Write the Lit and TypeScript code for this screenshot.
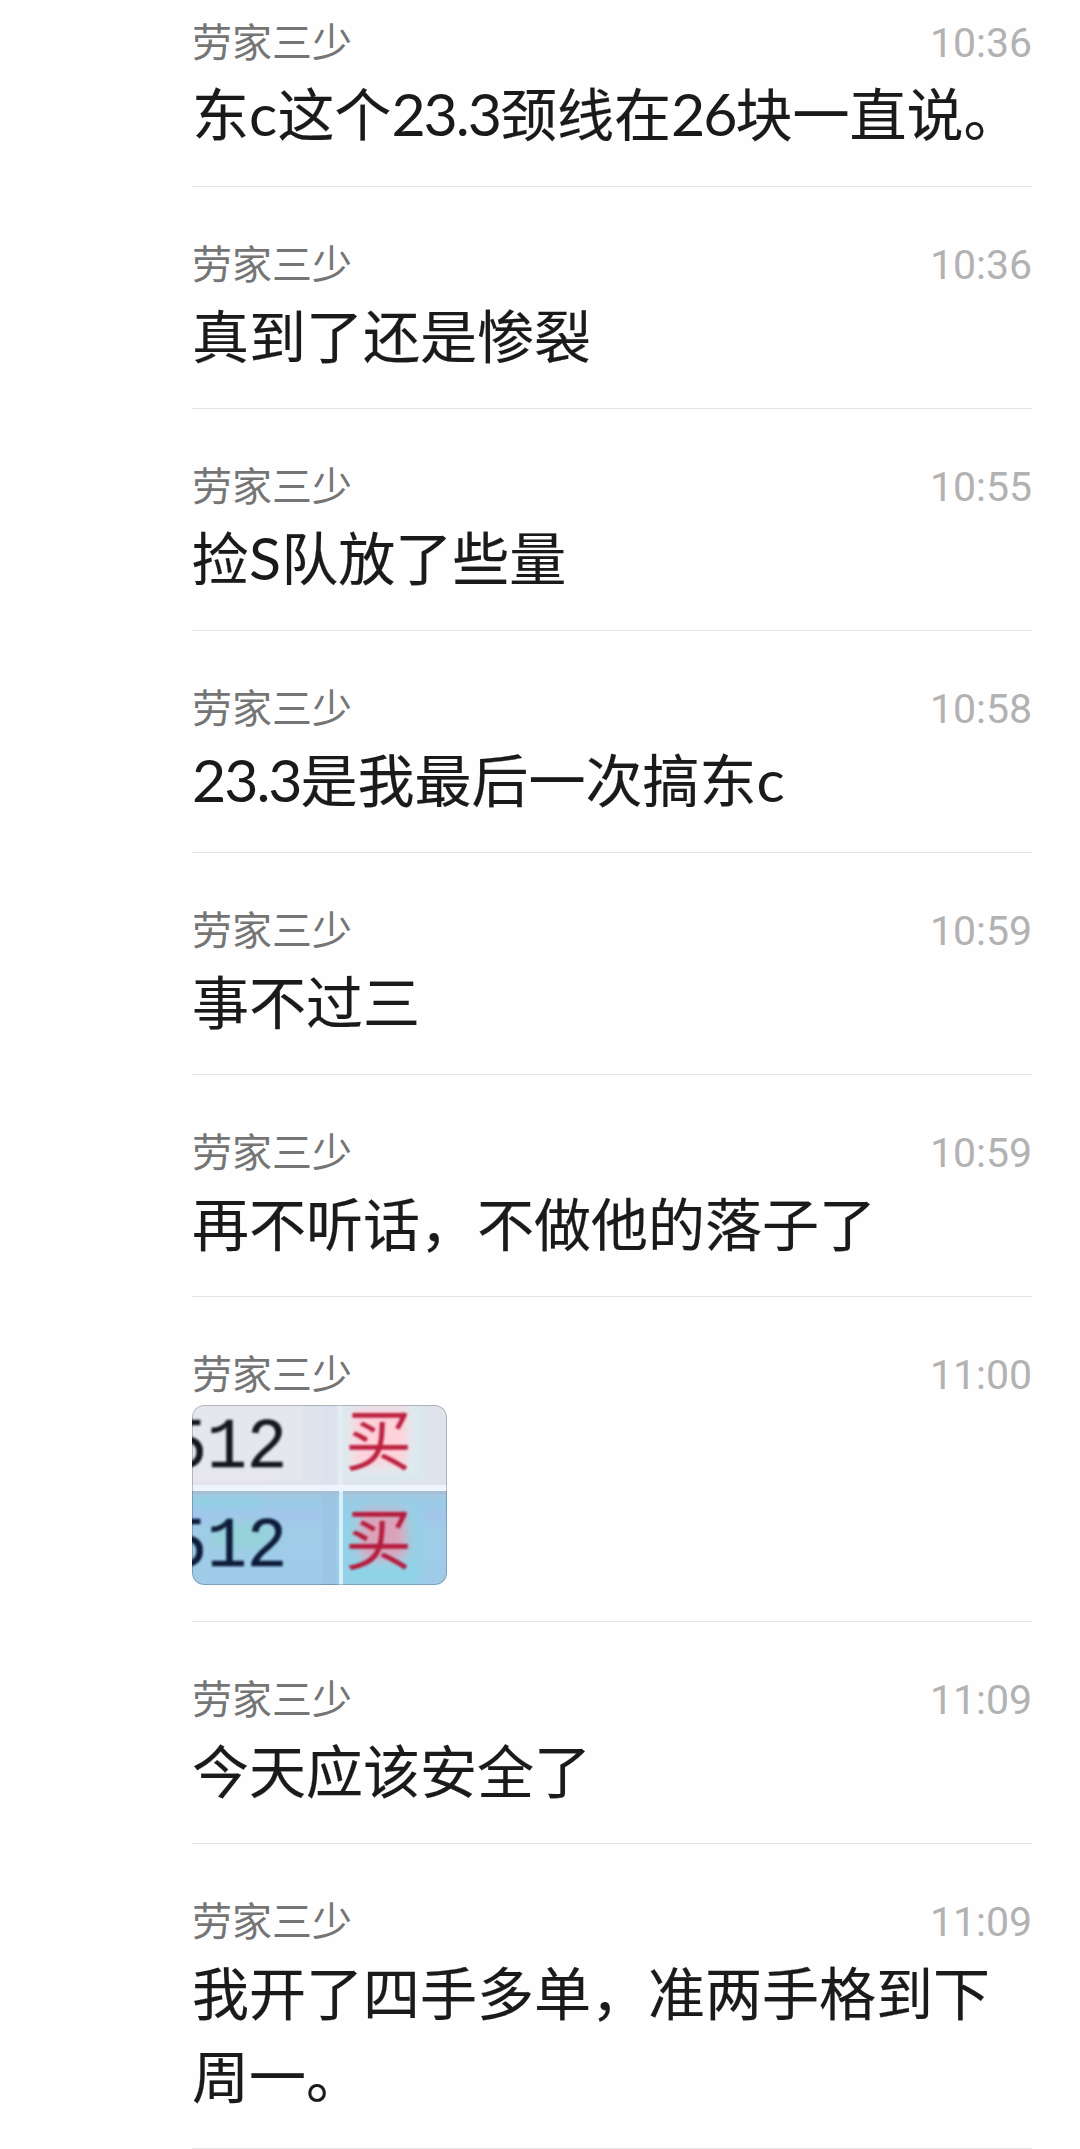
import { LitElement, html, css, svg } from "lit";
import { customElement, property } from "lit/decorators.js";

interface Message {
  time: string;
  text?: string;
}

const SENDER = "劳家三少";

const MESSAGES: Message[] = [
  { time: "10:36", text: "东c这个23.3颈线在26块一直说。" },
  { time: "10:36", text: "真到了还是惨裂" },
  { time: "10:55", text: "捡S队放了些量" },
  { time: "10:58", text: "23.3是我最后一次搞东c" },
  { time: "10:59", text: "事不过三" },
  { time: "10:59", text: "再不听话，不做他的落子了" },
  { time: "11:00" },
  { time: "11:09", text: "今天应该安全了" },
  { time: "11:09", text: "我开了四手多单，准两手格到下周一。" },
];

/** Cropped thumbnail of two order rows: lot number and direction. */
@customElement("order-thumb")
export class OrderThumb extends LitElement {
  static styles = css`
    :host { display: block; width: 255px; height: 180px; border-radius: 12px; overflow: hidden; }
    svg { display: block; }
    .num { font-family: "Liberation Mono", monospace; font-size: 71px; }
    .dir { font-family: "Noto Sans CJK SC", sans-serif; font-size: 67px; font-weight: 400; }
  `;

  private row(y: number, ink: string, red: string) {
    return svg`
      <text class="num" x="-25" y=${y} fill=${ink} stroke=${ink} stroke-width="0.5" textLength="120" lengthAdjust="spacingAndGlyphs">512</text>
      <text class="dir" x="153" y=${y - 2} fill=${red}>买</text>`;
  }

  render() {
    return html`<svg width="255" height="180" viewBox="0 0 255 180">
      <defs>
        <filter id="soft" x="-40%" y="-40%" width="180%" height="180%"><feGaussianBlur stdDeviation="6" /></filter>
        <filter id="ink" x="-5%" y="-5%" width="110%" height="110%"><feGaussianBlur stdDeviation="0.9" /></filter>
        <linearGradient id="lower" x1="0" y1="0" x2="0" y2="1">
          <stop offset="0" stop-color="#a9c6de" />
          <stop offset="0.12" stop-color="#9acbe6" />
          <stop offset="0.25" stop-color="#a3c6ec" />
          <stop offset="0.45" stop-color="#9fcde8" />
          <stop offset="1" stop-color="#9fcbe9" />
        </linearGradient>
      </defs>
      <rect width="255" height="86" fill="#dee3ec" />
      <rect width="110" height="76" fill="#e4e8ee" />
      <rect y="86" width="255" height="94" fill="url(#lower)" />
      <g filter="url(#soft)">
        <rect x="150" y="0" width="78" height="72" fill="#d9eef2" />
        <rect x="160" y="4" width="56" height="58" fill="#ffd2da" />
        <rect x="152" y="100" width="76" height="80" fill="#8fd3e6" />
        <rect x="168" y="106" width="46" height="48" fill="#dba3b8" />
        <rect x="20" y="118" width="60" height="24" fill="#94d2d8" />
        <rect x="0" y="92" width="70" height="8" fill="#8bd2e2" />
        <rect x="0" y="72" width="80" height="6" fill="#efe2f0" />
      </g>
      <rect y="80" width="255" height="6" fill="#edf4fd" />
      <rect y="86" width="255" height="3" fill="#a5bfd6" />
      <rect x="130" width="14" height="80" fill="#dce2ed" />
      <rect x="146" width="5" height="80" fill="#e4ecf4" />
      <rect x="130" y="89" width="14" height="91" fill="#9dc4e3" />
      <rect x="147" y="86" width="4" height="94" fill="#d4f1fb" />
      <g filter="url(#ink)">
        ${this.row(62, "#17191f", "#bd2140")}
        ${this.row(161, "#0b1c3a", "#b51a3e")}
      </g>
      <rect x="0.5" y="0.5" width="254" height="179" rx="11.5" fill="none" stroke="#000" stroke-opacity="0.22" />
    </svg>`;
  }
}

@customElement("chat-item")
export class ChatItem extends LitElement {
  @property({ attribute: false }) message!: Message;

  static styles = css`
    :host { display: block; border-bottom: 1px solid #e4e4e4; }
    .head { display: flex; justify-content: space-between; align-items: center; height: 58px; }
    .name { font-size: 40px; color: #757575; }
    .time { font-family: Roboto, sans-serif; font-weight: 400; font-size: 41px; color: #b2b2b2; padding-top: 6px; }
    .text {
      font-size: 57px;
      line-height: 83px;
      color: #1a1a1a;
      padding: 1px 0 33px;
      word-break: break-all;
      -webkit-text-stroke: 0.2px #1a1a1a;
    }
    .latin { font-family: Lato, sans-serif; font-size: 59px; line-height: 1; letter-spacing: -2px; -webkit-text-stroke: 0; }
    .letter { letter-spacing: 0.2px; }
    .media { padding: 4px 0 36px; }
  `;

  private runs(text: string) {
    return text.split(/([A-Za-z]+|[0-9.]+)/).map((part) => {
      if (/^[A-Za-z]+$/.test(part)) return html`<span class="latin letter">${part}</span>`;
      if (/^[0-9.]+$/.test(part)) return html`<span class="latin">${part}</span>`;
      return part;
    });
  }

  render() {
    const { time, text } = this.message;
    return html`
      <div class="head"><span class="name">${SENDER}</span><span class="time">${time}</span></div>
      ${text
        ? html`<div class="text">${this.runs(text)}</div>`
        : html`<div class="media"><order-thumb></order-thumb></div>`}
    `;
  }
}

@customElement("app-root")
export class AppRoot extends LitElement {
  static styles = css`
    :host {
      display: block;
      box-sizing: border-box;
      min-height: 2149px;
      padding: 11px 48px 0 192px;
      background: #fefefe;
      font-family: "Noto Sans CJK SC", sans-serif;
    }
    .list { display: flex; flex-direction: column; gap: 46px; }
  `;

  render() {
    return html`<div class="list">${MESSAGES.map((m) => html`<chat-item .message=${m}></chat-item>`)}</div>`;
  }
}
